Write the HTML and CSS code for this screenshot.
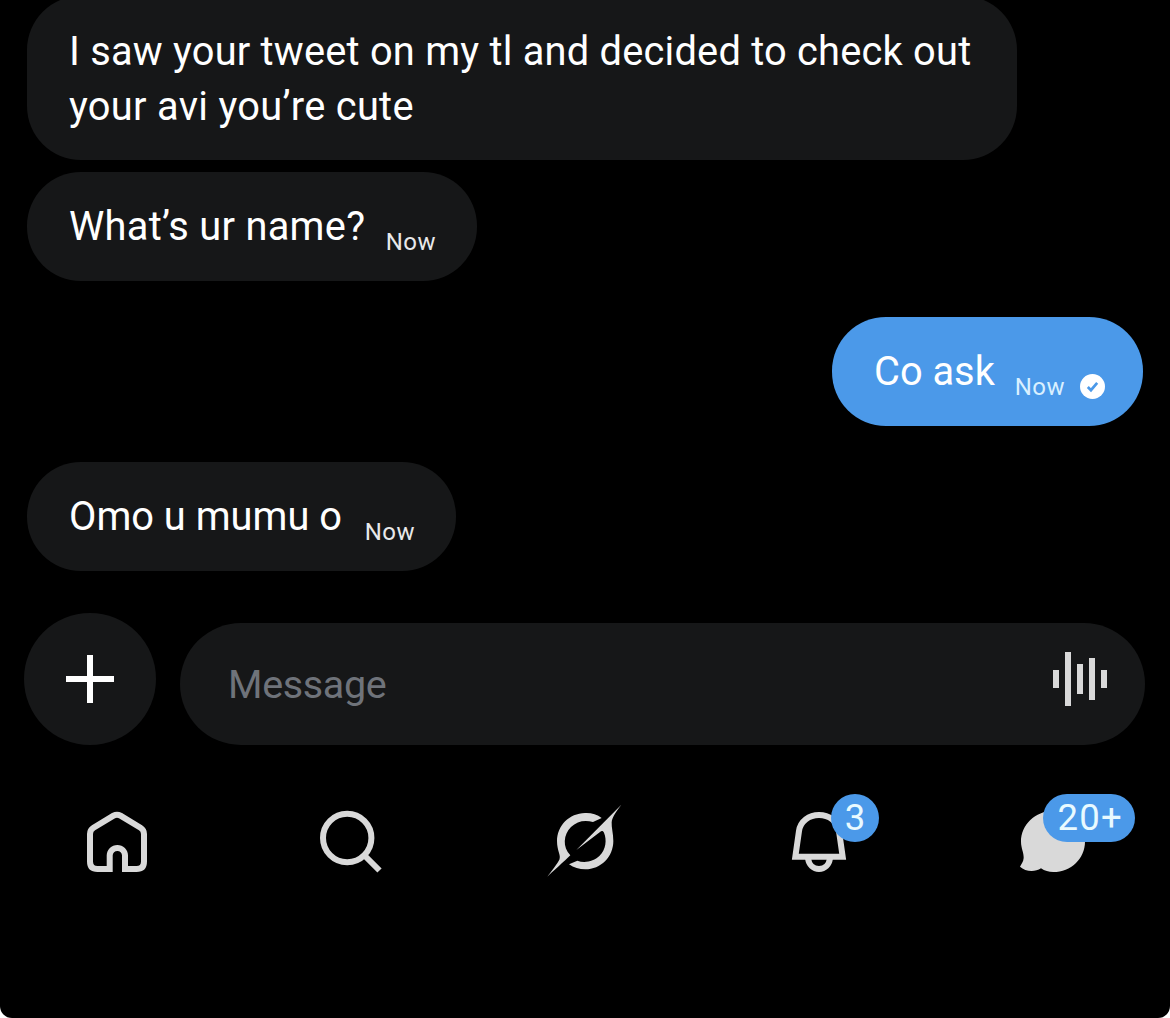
FILE: index.html
```html
<!DOCTYPE html>
<html lang="en">
<head>
<meta charset="utf-8">
<title>Messages</title>
<link rel="stylesheet" href="styles.css">
</head>
<body>
<div class="screen">
  <main class="chat">
    <div class="bubble bubble-long"><p class="text">I saw your tweet on my tl and decided to check out<br><span class="second-line">your avi you’re cute</span></p></div>
    <div class="bubble bubble-name"><p class="text">What’s ur name?</p><time class="time">Now</time></div>
    <div class="bubble bubble-sent"><p class="text">Co ask</p><time class="time">Now</time>
      <svg class="check" viewBox="0 0 24 24"><circle cx="12" cy="12" r="12" fill="#fff"/><path d="M7.500 12.500l3 3 6-7" fill="none" stroke="#4b99e9" stroke-width="2.600"/></svg>
    </div>
    <div class="bubble bubble-reply"><p class="text">Omo u mumu o</p><time class="time">Now</time></div>
  </main>
  <div class="composer">
    <button class="add" aria-label="Add"><svg viewBox="0 0 48 48"><path d="M0 24H48M24 0V48" stroke="#fff" stroke-width="6"/></svg></button>
    <div class="field"><span class="placeholder">Message</span>
      <svg class="wave" viewBox="0 0 54 54"><path d="M3 18V36M15 0V54M27 12V42M39 6V48M51 18V36" stroke="#d9d9d9" stroke-width="6"/></svg>
    </div>
  </div>
  <nav class="tabs">
    <a class="tab"><svg class="icon" viewBox="0 0 72 72"><path class="line" d="M28.700 63H16.500Q9 63 9 55.500V28Q9 24 12.500 21.800L32.500 9.700Q36 7.700 39.500 9.700L59.500 21.800Q63 24 63 28V55.500Q63 63 55.500 63H44V49.600A7.650 7.650 0 0 0 28.700 49.600Z"/></svg></a>
    <a class="tab"><svg class="icon" viewBox="0 0 72 72"><circle class="line" cx="32.200" cy="32" r="24.200"/><path class="line" d="M49 49L64.500 64.500"/></svg></a>
    <a class="tab"><svg class="icon" viewBox="42 33 216 216"><path class="solid" d="M200 69C186 58 168 53 150 54C103 55 66 92 66 138C66 168 79 181 73 194C66 207 50 228 37 245C52 231 90 197 106 181C82 157 85 118 108 96C126 78 150 74 174 81Z"/><path class="solid" d="M124 165L259 29C246 46 231 66 230 82C229 98 235 115 235 138C235 186 197 223 151 223C133 223 116 218 102 208L127 197C150 206 177 198 193 183C213 163 216 135 207 113C205 108 200 107 196 110Z"/></svg></a>
    <a class="tab"><svg class="icon" viewBox="9 63 216 216"><path class="wide-line" d="M46 215H188L177 138C173 109 147 90 117 90C87 90 61 109 57 138Z"/><path class="wide-line" d="M84 220C87 240 100 252 117 252C134 252 147 240 150 220"/></svg><span class="badge badge-round">3</span></a>
    <a class="tab"><svg class="icon" viewBox="21 63 216 216"><path class="solid" d="M129 78C76 78 33 119 33 170C33 190 42 203 41 219C40 231 34 237 30 245C46 260 74 262 93 250C104 258 116 261 130 261C183 261 225 220 225 170C225 119 182 78 129 78Z"/></svg><span class="badge badge-wide">20+</span></a>
  </nav>
</div>
</body>
</html>
```
FILE: styles.css
```css
* { box-sizing: border-box; }
html { background: #fff; }
body { margin: 0; font-family: Roboto, "Noto Sans", sans-serif; }
.screen {
  width: 1170px;
  height: 1018px;
  overflow: hidden;
  background: #000;
  border-radius: 0 0 12px 12px;
}
.chat {
  display: flex;
  flex-direction: column;
  align-items: flex-start;
  padding: 0 27px;
  margin-top: -4.5px;
}
.bubble {
  display: flex;
  height: 108.5px;
  padding: 27px 42px 0;
  border-radius: 54px;
  background: #161718;
  color: #fff;
}
.text {
  flex: none;
  margin: 0;
  font-size: 39.8px;
  line-height: 55px;
  white-space: nowrap;
}
.time {
  margin: 23px -1px 0 auto;
  font-size: 24px;
  line-height: 40px;
  letter-spacing: 0.5px;
  color: #e8e9ea;
}
.bubble-long { width: 990px; height: 164px; padding-top: 28px; letter-spacing: 0.22px; }
.second-line { letter-spacing: 0.3px; }
.bubble-name { width: 450px; margin-top: 12.5px; }
.bubble-name .text { letter-spacing: 0.3px; }
.bubble-sent {
  align-self: flex-end;
  width: 311px;
  margin-top: 36.5px;
  padding-right: 38px;
  background: #4b99e9;
}
.bubble-sent .time { margin-right: 0; color: #d9f0ff; }
.bubble-reply { width: 429px; margin-top: 36.5px; }
.check { width: 25px; height: 25px; margin: 29.5px 0 0 15px; flex: none; }
.composer {
  display: flex;
  align-items: flex-start;
  gap: 24px;
  margin-top: 42.5px;
  padding: 0 25px 0 24px;
}
.add {
  display: flex;
  align-items: center;
  justify-content: center;
  width: 132px;
  height: 132px;
  padding: 0;
  border: 0;
  border-radius: 50%;
  background: #161718;
}
.add svg { width: 48px; height: 48px; }
.field {
  display: flex;
  flex: 1;
  justify-content: space-between;
  height: 121.5px;
  margin-top: 10px;
  padding: 29px 38px 0 48px;
  border-radius: 61px;
  background: #161718;
}
.placeholder { font-size: 39.5px; line-height: 65px; color: #6f737a; letter-spacing: -0.35px; }
.wave { width: 54px; height: 54px; }
.tabs {
  display: grid;
  grid-template-columns: repeat(5, 1fr);
  margin-top: 61px;
}
.tab { position: relative; display: flex; justify-content: center; }
.icon { width: 72px; height: 72px; overflow: visible; }
.line { fill: none; stroke: #d9d9d9; stroke-width: 6; }
.wide-line { fill: none; stroke: #d9d9d9; stroke-width: 18; }
.solid { fill: #d9d9d9; }
.badge {
  position: absolute;
  top: -12px;
  height: 48px;
  border-radius: 24px;
  background: #4b99e9;
  color: #e9faff;
  font-size: 36.5px;
  font-weight: 400;
  line-height: 48px;
  text-align: center;
}
.badge-round { left: 129px; width: 48px; }
.badge-wide { left: 106.5px; width: 92.5px; padding-left: 3px; letter-spacing: 1.2px; }
```
